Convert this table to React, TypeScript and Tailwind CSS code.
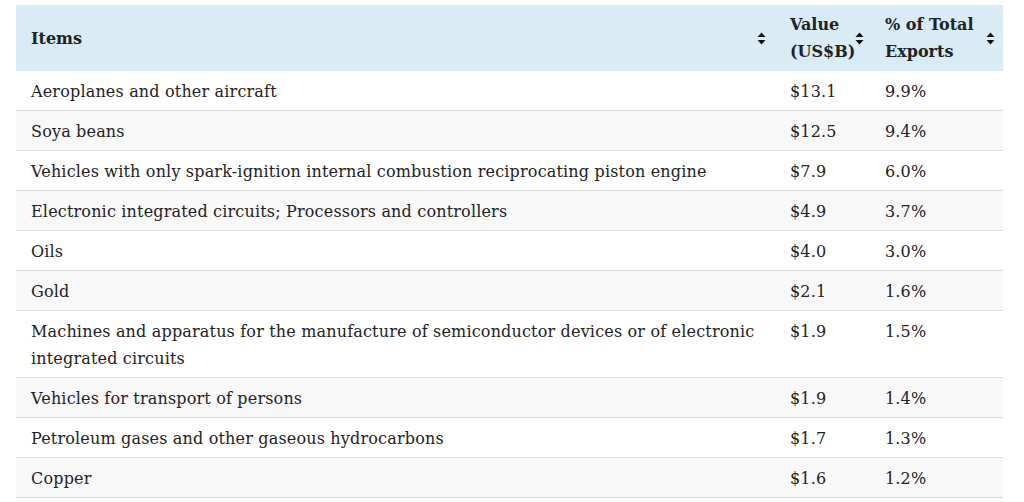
const rows: [string, string, string][] = [
  ["Aeroplanes and other aircraft", "$13.1", "9.9%"],
  ["Soya beans", "$12.5", "9.4%"],
  ["Vehicles with only spark-ignition internal combustion reciprocating piston engine", "$7.9", "6.0%"],
  ["Electronic integrated circuits; Processors and controllers", "$4.9", "3.7%"],
  ["Oils", "$4.0", "3.0%"],
  ["Gold", "$2.1", "1.6%"],
  ["Machines and apparatus for the manufacture of semiconductor devices or of electronic integrated circuits", "$1.9", "1.5%"],
  ["Vehicles for transport of persons", "$1.9", "1.4%"],
  ["Petroleum gases and other gaseous hydrocarbons", "$1.7", "1.3%"],
  ["Copper", "$1.6", "1.2%"],
];

const SortIcon = () => (
  <svg width="9" height="13" viewBox="0 0 9 13" className="shrink-0">
    <path d="M4.5 0.5 L8.5 5 H0.5 Z" fill="#111" />
    <path d="M4.5 12.5 L8.5 8 H0.5 Z" fill="#111" />
  </svg>
);

export default function App() {
  return (
    <div className="bg-white w-[1024px] h-[502px] overflow-hidden pt-[5px] pl-4 text-[#222] font-['DejaVu_Serif',serif] text-[16px] leading-[27px]">
      <table className="w-[987px] border-collapse table-fixed">
        <colgroup>
          <col className="w-[759px]" />
          <col className="w-[95px]" />
          <col className="w-[133px]" />
        </colgroup>
        <thead>
          <tr className="bg-[#d9ecf6] h-[66px]">
            <th className="text-left font-bold pl-[15px] pr-[9px] py-[6px]">
              <div className="flex items-center justify-between">
                <span>Items</span>
                <SortIcon />
              </div>
            </th>
            <th className="text-left font-bold pl-[15px] pr-[9px] py-[6px]">
              <div className="flex items-center justify-between">
                <span>Value (US$B)</span>
                <SortIcon />
              </div>
            </th>
            <th className="text-left font-bold pl-[15px] pr-[8px] py-[6px]">
              <div className="flex items-center justify-between">
                <span>% of Total Exports</span>
                <SortIcon />
              </div>
            </th>
          </tr>
        </thead>
        <tbody className="tracking-[0.17px]">
          {rows.map((r, i) => (
            <tr key={i} className={`border-b border-[#dcdcdc] ${i % 2 === 1 ? "bg-[#f8f8f8]" : "bg-white"}`}>
              <td className="align-top pl-[15px] pr-[8px] pt-[7px] pb-[5px]">{r[0]}</td>
              <td className="align-top pl-[15px] pt-[7px] pb-[5px]">{r[1]}</td>
              <td className="align-top pl-[15px] pt-[7px] pb-[5px]">{r[2]}</td>
            </tr>
          ))}
        </tbody>
      </table>
    </div>
  );
}
